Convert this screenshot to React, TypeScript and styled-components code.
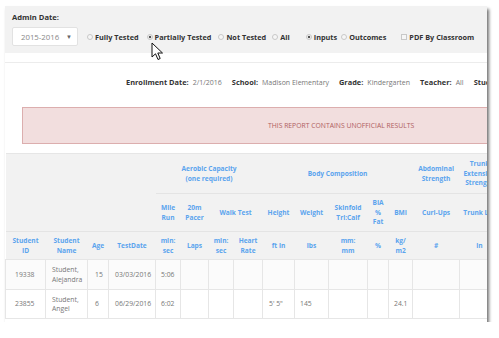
import React from "react";
import styled, { createGlobalStyle } from "styled-components";

const Global = createGlobalStyle`
  html, body { margin: 0; padding: 0; background: #ffffff; }
  body { font-family: "Open Sans", "Liberation Sans", sans-serif; }
  * { box-sizing: border-box; }
`;

const Frame = styled.div`
  position: relative;
  margin: 6px 0 0 5px;
  width: 482px;
  height: 316px;
  overflow: hidden;
  background: #fff;
  box-shadow: 2px 3px 3px rgba(0, 0, 0, 0.55);
`;

const Toolbar = styled.div`
  background: #f2f2f2;
  height: 47px;
  padding: 6px 0 0 7px;
`;

const FieldLabel = styled.div`
  font-size: 7.6px;
  font-weight: 700;
  color: #333;
  line-height: 11px;
  height: 15px;
`;

const Controls = styled.div`
  display: flex;
  align-items: center;
`;

const Select = styled.div`
  width: 66px;
  height: 19px;
  background: #fff;
  border: 1px solid #e2e2e2;
  border-radius: 2px;
  display: flex;
  align-items: center;
  justify-content: space-between;
  padding: 0 5px 0 8px;
  font-size: 7.8px;
  color: #888;
`;

const Caret = styled.span`
  font-size: 6px;
  color: #666;
`;

const Option = styled.label<{ $gap: number }>`
  display: flex;
  align-items: center;
  margin-left: ${(p) => p.$gap}px;
  font-size: 7.3px;
  font-weight: 700;
  color: #333;
  white-space: nowrap;
`;

const Radio = styled.span<{ $on?: boolean }>`
  width: 6px;
  height: 6px;
  border-radius: 50%;
  border: 1px solid #c8c8c8;
  background: ${(p) =>
    p.$on ? "radial-gradient(circle, #555 0 1.3px, #f4f4f4 1.6px)" : "#f6f6f6"};
  margin-right: 2px;
`;

const Check = styled.span`
  width: 6px;
  height: 6px;
  border: 1px solid #c8c8c8;
  background: #f6f6f6;
  margin-right: 2px;
`;

const Divider = styled.div`
  margin-top: 9px;
  border-top: 1px solid #ececec;
`;

const InfoRow = styled.div`
  display: flex;
  align-items: center;
  height: 12px;
  margin: 13px 0 0 121px;
  white-space: nowrap;
  font-size: 7px;
`;

const InfoLabel = styled.span`
  font-weight: 700;
  color: #333;
  margin-right: 4px;
  font-size: 7.4px;
`;

const InfoValue = styled.span`
  color: #777;
  margin-right: 10px;
`;

const Alert = styled.div`
  margin: 19px 0 0 17px;
  width: 500px;
  height: 37px;
  background: #f2dede;
  border: 1px solid #dcaeae;
  display: flex;
  align-items: center;
  padding-left: 245px;
  font-size: 6.8px;
  color: #b0605e;
  white-space: nowrap;
`;

const Table = styled.table`
  margin-top: 9px;
  border-collapse: collapse;
  table-layout: fixed;
  width: 494px;
  border-top: 1px solid #e6e6e6;
`;

const Th = styled.th<{ $line?: boolean }>`
  background: #f2f2f2;
  color: #5ba4ee;
  font-size: 6.6px;
  font-weight: 700;
  line-height: 9.5px;
  text-align: center;
  vertical-align: middle;
  padding: 0 2px;
  border-bottom: ${(p) => (p.$line ? "1px solid #e4e4e4" : "none")};
  overflow: hidden;
  white-space: nowrap;
`;

const Tr = styled.tr<{ $h: number; $bg?: string }>`
  height: ${(p) => p.$h}px;
  background: ${(p) => p.$bg || "transparent"};
`;

const Td = styled.td<{ $pad?: number }>`
  border: 1px solid #e6e6e6;
  color: #777;
  font-size: 6.8px;
  line-height: 9.5px;
  padding: 0 0 0 ${(p) => p.$pad ?? 5}px;
  vertical-align: middle;
  white-space: nowrap;
  overflow: hidden;
`;

const Cursor = styled.svg`
  position: absolute;
  left: 146px;
  top: 36px;
`;

const widths = [40, 42, 21, 47, 25, 28, 25, 29, 32, 34, 39, 21, 24, 47, 40];

const rows = [
  { id: "19338", name: ["Student,", "Alejandra"], age: "15", date: "03/03/2016", mile: "5:06", h: "", w: "", bmi: "", bg: "#fbfbfb", ht: 30 },
  { id: "23855", name: ["Student,", "Angel"], age: "6", date: "06/29/2016", mile: "6:02", h: "5' 5\"", w: "145", bmi: "24.1", bg: "#fff", ht: 29 },
];

const L = ({ a, b, c }: { a: string; b?: string; c?: string }) => (
  <>
    {a}
    {b !== undefined && <br />}
    {b}
    {c !== undefined && <br />}
    {c}
  </>
);

export default function App() {
  return (
    <>
      <Global />
      <Frame>
        <Toolbar>
          <FieldLabel>Admin Date:</FieldLabel>
          <Controls>
            <Select>
              <span>2015-2016</span>
              <Caret>▼</Caret>
            </Select>
            <Option $gap={9}><Radio />Fully Tested</Option>
            <Option $gap={8}><Radio $on />Partially Tested</Option>
            <Option $gap={7}><Radio />Not Tested</Option>
            <Option $gap={6}><Radio />All</Option>
            <Option $gap={16}><Radio $on />Inputs</Option>
            <Option $gap={4}><Radio />Outcomes</Option>
            <Option $gap={15}><Check />PDF By Classroom</Option>
          </Controls>
        </Toolbar>
        <Divider />
        <InfoRow>
          <InfoLabel>Enrollment Date:</InfoLabel>
          <InfoValue>2/1/2016</InfoValue>
          <InfoLabel>School:</InfoLabel>
          <InfoValue>Madison Elementary</InfoValue>
          <InfoLabel>Grade:</InfoLabel>
          <InfoValue>Kindergarten</InfoValue>
          <InfoLabel>Teacher:</InfoLabel>
          <InfoValue>All</InfoValue>
          <InfoLabel>Student:</InfoLabel>
        </InfoRow>
        <Alert>THIS REPORT CONTAINS UNOFFICIAL RESULTS</Alert>
        <Table>
          <colgroup>
            {widths.map((w, i) => (
              <col key={i} style={{ width: w }} />
            ))}
          </colgroup>
          <thead>
            <Tr $h={40}>
              <Th colSpan={4} rowSpan={2} $line />
              <Th colSpan={4} $line><L a="Aerobic Capacity" b="(one required)" /></Th>
              <Th colSpan={5} $line>Body Composition</Th>
              <Th $line><L a="Abdominal" b="Strength" /></Th>
              <Th $line><L a="Trunk" b="Extension" c="Strength" /></Th>
            </Tr>
            <Tr $h={38}>
              <Th $line><L a="Mile" b="Run" /></Th>
              <Th $line><L a="20m" b="Pacer" /></Th>
              <Th colSpan={2} $line>Walk Test</Th>
              <Th $line>Height</Th>
              <Th $line>Weight</Th>
              <Th $line><L a="Skinfold" b="Tri:Calf" /></Th>
              <Th $line><L a="BIA" b="%" c="Fat" /></Th>
              <Th $line>BMI</Th>
              <Th $line>Curl-Ups</Th>
              <Th $line>Trunk Lift</Th>
            </Tr>
            <Tr $h={28}>
              <Th><L a="Student" b="ID" /></Th>
              <Th><L a="Student" b="Name" /></Th>
              <Th>Age</Th>
              <Th>TestDate</Th>
              <Th><L a="min:" b="sec" /></Th>
              <Th>Laps</Th>
              <Th><L a="min:" b="sec" /></Th>
              <Th><L a="Heart" b="Rate" /></Th>
              <Th>ft in</Th>
              <Th>lbs</Th>
              <Th><L a="mm:" b="mm" /></Th>
              <Th>%</Th>
              <Th><L a="kg/" b="m2" /></Th>
              <Th>#</Th>
              <Th>in</Th>
            </Tr>
          </thead>
          <tbody>
            {rows.map((r) => (
              <Tr key={r.id} $h={r.ht} $bg={r.bg}>
                <Td $pad={9}>{r.id}</Td>
                <Td $pad={6}><L a={r.name[0]} b={r.name[1]} /></Td>
                <Td $pad={7}>{r.age}</Td>
                <Td $pad={6}>{r.date}</Td>
                <Td>{r.mile}</Td>
                <Td />
                <Td />
                <Td />
                <Td $pad={6}>{r.h}</Td>
                <Td>{r.w}</Td>
                <Td />
                <Td />
                <Td>{r.bmi}</Td>
                <Td />
                <Td />
              </Tr>
            ))}
          </tbody>
        </Table>
        <Cursor width="14" height="20" viewBox="0 0 14 20">
          <path
            d="M1 1 L1 15 L4.5 11.8 L7 17.5 L9.2 16.5 L6.8 11 L11.5 11 Z"
            fill="#fff"
            stroke="#111"
            strokeWidth="1"
            strokeLinejoin="round"
          />
        </Cursor>
      </Frame>
    </>
  );
}
